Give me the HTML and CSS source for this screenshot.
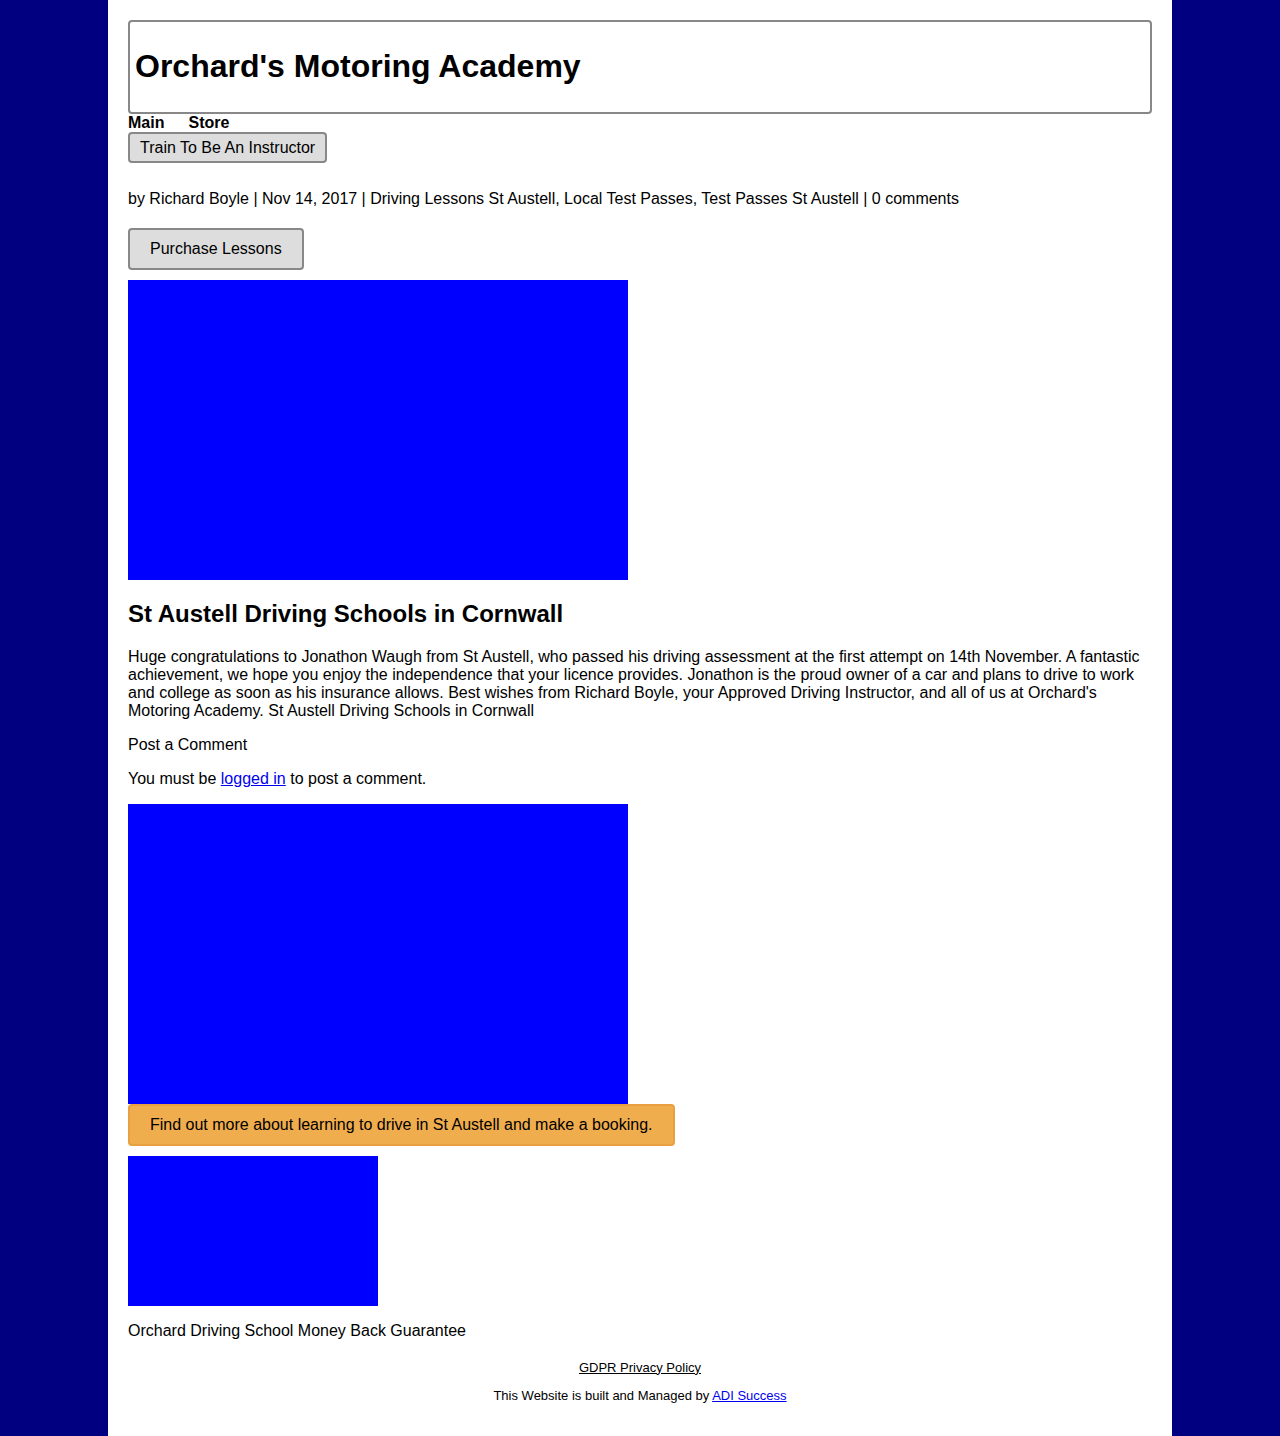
FILE: index.html
```html
<!DOCTYPE html>
<html lang="en">
<head>
<meta charset="utf-8">
<title>Orchard's Motoring Academy</title>
<link rel="stylesheet" href="styles.css">
</head>
<body>
<div class="page">
  <header class="site-header">
    <h1 class="site-title">Orchard's Motoring Academy</h1>
  </header>
  <nav class="main-nav">
    <a class="nav-link" href="#">Main</a>
    <a class="nav-link" href="#">Store</a>
  </nav>
  <div class="nav-actions">
    <a class="btn btn-small" href="#">Train To Be An Instructor</a>
  </div>
  <p class="post-meta">by Richard Boyle | Nov 14, 2017 | Driving Lessons St Austell, Local Test Passes, Test Passes St Austell | 0 comments</p>
  <div class="purchase">
    <a class="btn btn-large" href="#">Purchase Lessons</a>
  </div>
  <div class="image image-large"></div>
  <h2 class="post-title">St Austell Driving Schools in Cornwall</h2>
  <p class="post-body">Huge congratulations to Jonathon Waugh from St Austell, who passed his driving assessment at the first attempt on 14th November. A fantastic achievement, we hope you enjoy the independence that your licence provides. Jonathon is the proud owner of a car and plans to drive to work and college as soon as his insurance allows. Best wishes from Richard Boyle, your Approved Driving Instructor, and all of us at Orchard's Motoring Academy. St Austell Driving Schools in Cornwall</p>
  <p class="text">Post a Comment</p>
  <p class="text">You must be <a class="link" href="#">logged in</a> to post a comment.</p>
  <div class="image image-large"></div>
  <a class="btn btn-orange" href="#">Find out more about learning to drive in St Austell and make a booking.</a>
  <div class="image image-small"></div>
  <p class="text">Orchard Driving School Money Back Guarantee</p>
  <footer class="site-footer">
    <p class="footer-line"><a class="footer-link" href="#">GDPR Privacy Policy</a></p>
    <p class="footer-line">This Website is built and Managed by <a class="link" href="#">ADI Success</a></p>
  </footer>
</div>
</body>
</html>
```
FILE: styles.css
```css
html, body {
  margin: 0;
  padding: 0;
}
body {
  background: #000080;
  font-family: "Liberation Sans", Arial, sans-serif;
  font-size: 16px;
  color: #000;
}
.page {
  width: 1024px;
  margin: 0 auto;
  padding: 20px 20px 22px;
  background: #fff;
  min-height: 100vh;
  box-sizing: content-box;
}
.site-header {
  border: 2px solid #888;
  border-radius: 4px;
  padding: 5px 5px;
}
.site-title {
  font-size: 32px;
  font-weight: bold;
  margin: 21.44px 0;
  line-height: 36.8px;
}
.main-nav {
  display: flex;
  gap: 24px;
  line-height: 18px;
}
.nav-link {
  color: #000;
  font-weight: bold;
  text-decoration: none;
}
.nav-actions {
  display: flex;
}
.btn {
  display: inline-block;
  background: #ddd;
  border: 2px solid #888;
  border-radius: 4px;
  color: #000;
  text-decoration: none;
  font-size: 16px;
}
.btn-small {
  padding: 4px 10px;
  line-height: 19px;
}
.post-meta {
  margin: 27px 0 20px;
  line-height: 18px;
}
.purchase {
  display: flex;
  margin-bottom: 10px;
}
.btn-large {
  padding: 10px 20px;
  line-height: 18px;
}
.image {
  background: #0000ff;
}
.image-large {
  width: 500px;
  height: 300px;
}
.image-small {
  width: 250px;
  height: 150px;
  margin-top: 10px;
}
.post-title {
  font-size: 24px;
  font-weight: bold;
  line-height: 28px;
  margin: 20px 0;
}
.post-body {
  margin: 16px 0;
  line-height: 18px;
}
.text {
  margin: 16px 0;
  line-height: 18px;
}
.link {
  color: #0000ee;
  text-decoration: underline;
}
.btn-orange {
  background: #f0ad4e;
  border-color: #e8a040;
  padding: 10px 20px;
  line-height: 18px;
}
.site-footer {
  text-align: center;
  font-size: 13px;
  margin-top: 20px;
}
.footer-line {
  margin: 0 0 13px;
  line-height: 15px;
}
.footer-link {
  color: #000;
  text-decoration: underline;
}
```
